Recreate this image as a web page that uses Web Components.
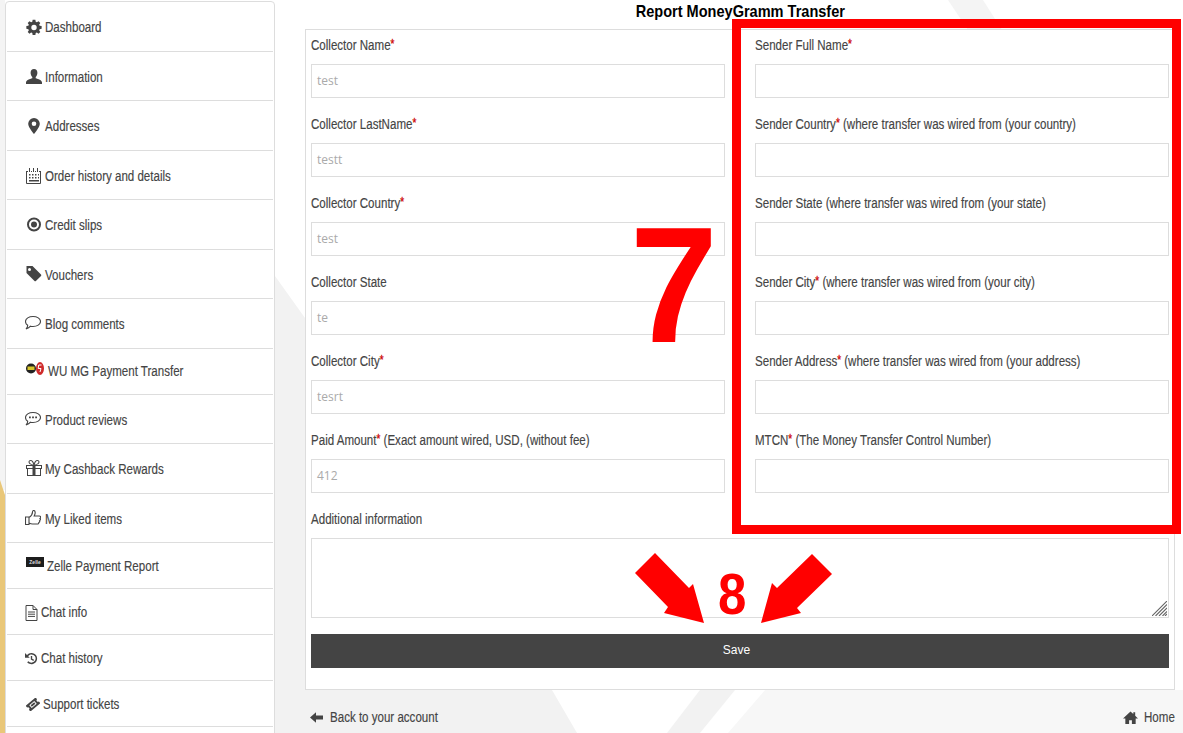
<!DOCTYPE html>
<html><head><meta charset="utf-8">
<style>
html,body{margin:0;padding:0;height:733px;overflow:hidden;background:#fff}
body{font-family:"Liberation Sans",Arial,sans-serif;color:#444}
</style></head><body>
<account-page></account-page>
<template id="t-page"><style>
:host{display:block;position:relative;width:1183px;height:733px;overflow:hidden;background:#fff}
.bg{position:absolute;left:0;top:0}
.wrap{position:relative;display:grid;grid-template-columns:270px 1fr;column-gap:30px;padding:1px 8px 0 5px;box-sizing:border-box;height:733px}
main{display:flex;flex-direction:column;min-width:0}
h1{margin:0;height:28px;font:bold 17px/21px "Liberation Sans",sans-serif;color:#000;text-align:center}
h1 span{display:inline-block;white-space:nowrap;transform:scaleX(.855);transform-origin:center}
.foot{display:flex;justify-content:space-between;margin-top:18px;padding-left:5px;font-size:14px;line-height:18px;color:#444;-webkit-text-stroke:.15px #444}
.foot span{display:flex;align-items:center}
.foot svg{width:15px;height:15px;fill:#444;flex:none}
.foot i{font-style:normal;display:inline-block;white-space:nowrap;transform:scaleX(.825);transform-origin:left}
.foot .b svg{width:13px;margin-right:7px}
.foot .h svg{margin-right:6px}
.foot .h i{margin-right:-6px}
.ov{position:absolute;left:0;top:0;pointer-events:none}
.box{position:absolute;left:732px;top:19px;width:449px;height:515px;box-sizing:border-box;border:9px solid #f00}
.n{position:absolute;color:#f00;font-family:"Liberation Sans",sans-serif;font-weight:bold;line-height:1}
.seven{left:630px;top:202px;font-size:166px;transform:scaleX(.95);transform-origin:left}
.eight{left:716px;top:565px;font-size:58px;transform:scaleX(.88);transform-origin:center}
</style>
<svg class="bg" width="1183" height="733">
<rect x="0" y="0" width="5" height="490" fill="#f4f4f4"/>
<polygon points="275,276 305,318 552,690 577,733 275,733" fill="#f2f2f2"/>
<polygon points="700,690 735,690 700,733 667,733" fill="#f2f2f2"/>
<polygon points="765,690 1183,690 1183,733 728,733" fill="#f7f7f7"/>
<polygon points="948,0 983,0 1002,30 968,30" fill="#f4f4f4"/>
<polygon points="0,480 5,495 5,733 0,733" fill="#e9c779"/>
</svg>
<div class="wrap">
<side-menu></side-menu>
<main>
<h1><span>Report MoneyGramm Transfer</span></h1>
<report-form></report-form>
<div class="foot">
<span class="b"><svg viewBox="0 0 13 15"><path d="M0 7.500L6 2.200v3.300h7v4H6v3.300z"/></svg><i>Back to your account</i></span>
<span class="h"><svg viewBox="0 0 16 16"><path d="M8 1.500L0 9h2.500v6h4v-4h3v4h4V9H16l-3-2.800V2.500h-2v1.800z"/></svg><i>Home</i></span>
</div>
</main>
</div>
<div class="ov"><div class="box"></div><div class="n seven">7</div><div class="n eight">8</div>
<svg width="1183" height="733" style="position:absolute;left:0;top:0"><g fill="#f00">
<polygon points="655,553 635,573 668,607 664,613 704,623 693,584 689,588"/>
<polygon points="812,554 832,574 797,608 801,613 761,623 772,583 777,588"/></g></svg>
</div>
</template>

<template id="t-menu"><style>
:host{display:block;align-self:start;background:#fff;border:1px solid #ddd;border-radius:4px;box-sizing:border-box;width:270px;padding:0 1px;height:760px}
</style><div id="r"></div></template>

<template id="t-item"><style>
:host{display:flex;align-items:flex-start;box-sizing:border-box;border-bottom:1px solid #ddd;padding-left:19px;font-size:14px;color:#444}
svg{display:block;width:16px;height:16px;fill:#444;stroke:none}
.t{white-space:nowrap;line-height:18px;display:inline-block;transform:scaleX(.825);transform-origin:left;-webkit-text-stroke:.15px #444}
</style><span id="i"></span><span class="t"><slot></slot></span></template>

<template id="t-form"><style>
:host{display:block;box-sizing:border-box;height:661px;background:#fff;border:1px solid #ddd;padding:5px 5px 0 5px}
.g{display:grid;grid-template-columns:414px 414px;column-gap:30px}
button{display:block;width:100%;height:34px;margin-top:16px;border:0;background:#444;color:#fff;font:12px/32px "Liberation Sans",sans-serif;padding:0 7px 2px 0;text-align:center}
</style>
<div class="g" id="g"></div>
<form-field label="Additional information" area></form-field>
<button>Save</button></template>

<template id="t-field"><style>
:host{display:block;height:79px;font-size:14px;color:#444}
label{display:block;height:20px;line-height:21px;white-space:nowrap}
label span{display:inline-block;transform:scaleX(.825);transform-origin:left;-webkit-text-stroke:.15px #444}
label b{color:#c00;font-weight:normal;font-size:12px;line-height:0;vertical-align:2px;-webkit-text-stroke:.3px #c00}
.in{margin-top:9px;height:34px;box-sizing:border-box;border:1px solid #ddd;background:#fff;padding:0 6px 0 5px;line-height:32px;color:#aaa;font-family:"Open Sans","Liberation Sans",sans-serif;font-size:12px}
:host([area]){height:auto}
:host([area]) .in{height:80px;position:relative}
svg{position:absolute;right:1px;bottom:1px}
</style><label><span id="l"></span></label><div class="in" id="v"></div></template>

<script>
const tpl=id=>document.getElementById(id).content.cloneNode(true);
class FormField extends HTMLElement{connectedCallback(){if(this.shadowRoot)return;const s=this.attachShadow({mode:'open'});s.append(tpl('t-field'));
const l=this.getAttribute('label'),st=this.getAttribute('star'),x=this.getAttribute('extra');
const L=s.getElementById('l');L.textContent=l;if(st!==null){const b=document.createElement('b');b.textContent='*';L.append(b)}if(x)L.append(' '+x);
s.getElementById('v').textContent=this.getAttribute('value')||'';
if(this.hasAttribute('area'))s.getElementById('v').insertAdjacentHTML('beforeend','<svg width="15" height="15" viewBox="0 0 15 15" stroke="#666" stroke-width="1.1"><path d="M0 15L15 0M3.500 15L15 3.500M7 15L15 7M10.500 15L15 10.500M13 15L15 13"/></svg>');
}}
customElements.define('form-field',FormField);
class ReportForm extends HTMLElement{connectedCallback(){const s=this.attachShadow({mode:'open'});s.append(tpl('t-form'));
const L=[['Collector Name',1,'','test'],['Sender Full Name',1,'',''],['Collector LastName',1,'','testt'],['Sender Country',1,'(where transfer was wired from (your country)',''],['Collector Country',1,'','test'],['Sender State',0,'(where transfer was wired from (your state)',''],['Collector State',0,'','te'],['Sender City',1,'(where transfer was wired from (your city)',''],['Collector City',1,'','tesrt'],['Sender Address',1,'(where transfer was wired from (your address)',''],['Paid Amount',1,'(Exact amount wired, USD, (without fee)','412'],['MTCN',1,'(The Money Transfer Control Number)','']];
const g=s.getElementById('g');for(const [a,b,c,d] of L){const f=document.createElement('form-field');f.setAttribute('label',a);if(b)f.setAttribute('star','');if(c)f.setAttribute('extra',c);if(d)f.setAttribute('value',d);g.append(f)}
}}
customElements.define('report-form',ReportForm);
const IC={
gear:'<path d="M6.500 0h3l.4 2.200 1.300.6L13 1.500l2 2-1.300 1.900.6 1.300L16.500 7v3l-2.200.4-.6 1.300L15 13.500l-2 2-1.800-1.300-1.300.6-.4 2.200h-3l-.4-2.200-1.300-.6L3 15.500l-2-2 1.300-1.800-.6-1.300L-.500 10V7l2.200-.3.6-1.300L1 3.500l2-2 1.800 1.300 1.300-.6zM8 5.500a3 3 0 100 6 3 3 0 000-6z" transform="translate(.8 .8) scale(.9)" fill-rule="evenodd"/>',
user:'<path d="M8 0c2.200 0 3.400 1.600 3.400 3.700 0 1.700-.8 3.300-1.700 4.200v1.300c2.500.9 6.300 1.700 6.300 4.300V15H0v-1.500c0-2.600 3.800-3.400 6.300-4.300V7.900C5.400 7 4.600 5.400 4.600 3.700 4.600 1.600 5.800 0 8 0z"/>',
pin:'<path fill-rule="evenodd" d="M8 0a5.800 5.800 0 015.800 5.800C13.800 9.500 8 16 8 16S2.200 9.500 2.200 5.800A5.800 5.800 0 018 0zm0 3.500a2.300 2.300 0 100 4.600 2.300 2.300 0 000-4.600z"/>',
cal:'<path fill="none" stroke="#444" d="M.5 3v12.500h14V3"/><path d="M3 0h1v4H3zM7 0h1v4H7zM11 0h1v4h-1zM1 3h1v1H1zM5 3h1v1H5zM9 3h1v1H9zM13 3h1v1h-1zM3 6h1.500v1.500H3zm3 0h1.500v1.500H6zm3 0h1.500v1.500H9zm3 0h1v1.500h-1zM3 9h1.500v1.500H3zm3 0h1.500v1.500H6zm3 0h1.500v1.500H9zm3 0h1v1.500h-1zM3 12h10v1.500H3z"/>',
target:'<path fill-rule="evenodd" d="M8 .5a7 7 0 110 14 7 7 0 010-14zm0 2a5 5 0 100 10 5 5 0 000-10zm0 2a3 3 0 110 6 3 3 0 010-6z"/>',
tag:'<path fill-rule="evenodd" d="M.500 0H6.500L15 8.500a1 1 0 010 1.400L9.900 15a1 1 0 01-1.400 0L.500 7zM3.500 2a1.500 1.500 0 100 3 1.500 1.500 0 000-3z"/>',
chat:'<path fill="none" stroke="#444" stroke-width="1.100" d="M8 1.500c4 0 7.500 2 7.500 5s-3.500 5-7.500 5c-.9 0-1.800-.1-2.500-.3C4.500 12.500 3 13.500 1 14c.9-.8 1.700-2 1.700-3.700C1.300 9.400.500 8 .500 6.500c0-3 3.500-5 7.500-5z"/>',
dots:'<path fill="none" stroke="#444" stroke-width="1.100" d="M8 1.500c4 0 7.500 2 7.500 5s-3.500 5-7.500 5c-.9 0-1.800-.1-2.500-.3C4.500 12.500 3 13.500 1 14c.9-.8 1.700-2 1.700-3.700C1.300 9.400.500 8 .500 6.500c0-3 3.500-5 7.500-5z"/><path d="M4 5.500h1.800v1.800H4zm3.100 0h1.800v1.800H7.100zm3.100 0H12v1.800h-1.800z"/>',
gift:'<path fill-rule="evenodd" d="M0 5h6c-2-.5-3.500-1.500-3.500-3C2.500.800 3.500 0 4.700 0 6.300 0 7.500 1.500 8 3.200 8.500 1.500 9.700 0 11.300 0c1.200 0 2.200.800 2.200 2 0 1.500-1.500 2.500-3.500 3h6v4h-1v7H1V9H0zm4.700-4c-.6 0-1.200.4-1.200 1 0 1.200 2 2.300 3.800 2.700C7 3 6 1 4.700 1zm6.600 0C10 1 9 3 8.700 4.700 10.500 4.300 12.500 3.200 12.500 2c0-.6-.6-1-1.200-1zM1 6v2h5.500V6zm8.500 0v2H15V6zM2 9v6h4.500V9zm7.500 0v6H14V9z"/>',
like:'<path fill="none" stroke="#444" stroke-width="1.100" d="M.5 7h3.500v7.500H.5zM4 7.500c1.500-1 3.500-3 3.500-5.500 0-1 .5-1.500 1.200-1.500 1 0 1.500 1 1.500 2.200 0 1.200-.5 2.300-1 3.300h5c1 0 1.500.6 1.500 1.300 0 .6-.3 1-.7 1.200.3.300.5.700.4 1.200-.1.500-.4.800-.8 1 .2.400.2.800 0 1.200-.2.300-.5.500-.8.600.1.400 0 .8-.3 1.100-.3.300-.7.400-1.200.400H7.500c-1.500 0-2.500-.5-3.500-1"/>',
doc:'<path fill="none" stroke="#444" d="M2.500.5h7l4 4v11h-11zM9.500.5v4h4M4.500 7h7M4.500 9.200h7M4.500 11.400h7"/>',
hist:'<path fill-rule="evenodd" d="M8.500 1a6.500 6.500 0 11-5 10.700l1.400-1.200A4.700 4.700 0 108.500 2.800c-1.600 0-3 .8-3.800 2L6.500 6.500H1V1l2.300 2.300A6.500 6.500 0 018.500 1zM7.700 4.500h1.600v3.200l2.200 1.300-.8 1.300-3-1.800z"/>',
tick:'<g transform="rotate(-40 7 7)"><path fill-rule="evenodd" d="M0 3h14v2.500a1.500 1.500 0 000 3V11H0V8.500a1.500 1.500 0 000-3zM3.500 5v4h7V5zM4.500 6h5v2h-5z"/></g>'};
const BOX={doc:[13,16,'1.500 0 13 16'],hist:[13,14,'1 0 15 16'],tick:[14,13,'0 0 14 14']};
class MenuItem extends HTMLElement{connectedCallback(){if(this.shadowRoot)return;const s=this.attachShadow({mode:'open'});s.append(tpl('t-item'));
const t=this.getAttribute('i'),I=s.getElementById('i'),g=+this.getAttribute('gap'),p=+this.getAttribute('pad'),it=+this.getAttribute('it'),ml=+this.getAttribute('ml');
this.style.height=this.getAttribute('h')+'px';this.style.paddingTop=p+'px';
I.style.cssText='flex:none;display:block;margin:'+it+'px '+g+'px 0 '+ml+'px';
if(t==='wu')I.innerHTML='<svg viewBox="0 0 18 13" style="width:18px;height:13px"><circle cx="5" cy="6.500" r="5" fill="#222"/><rect x="1.500" y="4.500" width="7" height="3.500" fill="#d8c62a"/><ellipse cx="14" cy="6.500" rx="4" ry="6.500" fill="#cf2b2b"/><path d="M15.500 3h-2.800l-.5 3.500h2.800l-1 3.500" fill="none" stroke="#fff" stroke-width="1"/></svg>';
else if(t==='zelle')I.innerHTML='<svg viewBox="0 0 18 10" style="width:18px;height:10px"><rect width="18" height="10" fill="#1d1d1d"/><text x="9" y="7" text-anchor="middle" font-family="Liberation Sans" font-size="5" font-weight="bold" fill="#ddd">Zelle</text></svg>';
else{const B=BOX[t]||[16,16,'0 0 16 16'];I.innerHTML='<svg viewBox="'+B[2]+'" style="width:'+B[0]+'px;height:'+B[1]+'px">'+IC[t]+'</svg>'}}}
customElements.define('menu-item',MenuItem);
class SideMenu extends HTMLElement{connectedCallback(){const s=this.attachShadow({mode:'open'});s.append(tpl('t-menu'));
const M=[['gear','Dashboard',49.5,3,16,1,0],['user','Information',49.5,3,16,1,0],['pin','Addresses',49.5,3,16,1,0],['cal','Order history and details',49.5,3,16,1,0],['target','Credit slips',49.5,3,16,1,0],['tag','Vouchers',49.5,3,16,0,0],['chat','Blog comments',49.5,4,16,0,-1],['wu','WU MG Payment Transfer',46,4,13,0,0],['dots','Product reviews',49.5,4,16,0,-1],['gift','My Cashback Rewards',49.5,3,16,0,0],['like','My Liked items',49.5,4,16,0,-1],['zelle','Zelle Payment Report',46,3,14,0,0],['doc','Chat info',46,3,14,2,-1],['hist','Chat history',46,3,14,3,-1],['tick','Support tickets',46,3,14,3,0]];
const r=s.getElementById('r');for(const [i,t,h,g,p,it,ml] of M){const e=document.createElement('menu-item');e.setAttribute('i',i);e.setAttribute('h',h);e.setAttribute('gap',g);e.setAttribute('pad',p);e.setAttribute('it',it);e.setAttribute('ml',ml);e.textContent=t;r.append(e)}
}}
customElements.define('side-menu',SideMenu);
class AccountPage extends HTMLElement{connectedCallback(){this.attachShadow({mode:'open'}).append(tpl('t-page'))}}
customElements.define('account-page',AccountPage);
</script>
</body></html>
